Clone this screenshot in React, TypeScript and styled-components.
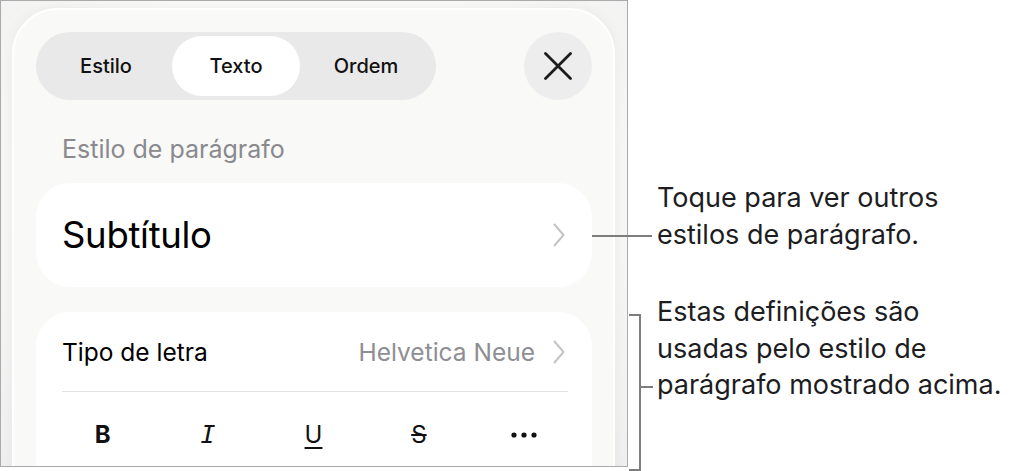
import React from "react";
import styled, { createGlobalStyle } from "styled-components";

const GlobalStyle = createGlobalStyle`
  html, body {
    margin: 0;
    padding: 0;
    background: #ffffff;
  }
  body {
    font-family: Inter, "Noto Sans", "Liberation Sans", sans-serif;
    color: #000;
  }
`;

const Page = styled.div`
  display: flex;
  align-items: flex-start;
  width: 1019px;
  height: 471px;
  overflow: hidden;
`;

const Frame = styled.div`
  box-sizing: border-box;
  width: 628px;
  height: 467px;
  flex-shrink: 0;
  border: 1px solid #aaaaaa;
  background: radial-gradient(ellipse at 50% 40%, #fafaf9 55%, #efefef 100%);
  overflow: hidden;
  padding: 7px 0 0 11px;
`;

const Panel = styled.div`
  box-sizing: border-box;
  width: 603px;
  height: 520px;
  border: 2px solid #ffffff;
  border-radius: 46px;
  background: #f9f9f8;
  box-shadow: 0 0 14px rgba(0, 0, 0, 0.05);
  padding: 22px 21px 0 22px;
  display: flex;
  flex-direction: column;
`;

const Header = styled.div`
  display: flex;
  align-items: center;
  justify-content: space-between;
`;

const Segmented = styled.div`
  display: grid;
  grid-template-columns: 132px 128px 132px;
  height: 68px;
  box-sizing: border-box;
  padding: 4px;
  border-radius: 34px;
  background: #e9e9e9;
`;

const Segment = styled.div<{ $active?: boolean }>`
  display: flex;
  align-items: center;
  justify-content: center;
  border-radius: 30px;
  font-size: 20px;
  font-weight: 500;
  color: #111;
  background: ${(p) => (p.$active ? "#ffffff" : "transparent")};
`;

const CloseButton = styled.div`
  width: 68px;
  height: 68px;
  border-radius: 50%;
  background: #ededed;
  display: flex;
  align-items: center;
  justify-content: center;
`;

const SectionLabel = styled.div`
  margin: 34px 0 0 26px;
  font-size: 25px;
  color: #8a8a8e;
  line-height: 30px;
`;

const Card = styled.div`
  background: #ffffff;
  border-radius: 34px;
`;

const StyleCard = styled(Card)`
  margin-top: 19px;
  height: 104px;
  box-sizing: border-box;
  padding: 0 27px 0 26px;
  display: flex;
  align-items: center;
  justify-content: space-between;
`;

const StyleName = styled.div`
  font-size: 36.5px;
  letter-spacing: -0.3px;
  color: #000;
`;

const FontCard = styled(Card)`
  margin-top: 25px;
  flex: 1;
`;

const Row = styled.div`
  height: 79px;
  margin: 0 24px 0 26px;
  padding-right: 3px;
  border-bottom: 1px solid #e2e2e2;
  display: flex;
  align-items: center;
  justify-content: space-between;
  font-size: 24.5px;
  color: #000;
`;

const RowValue = styled.div`
  display: flex;
  align-items: center;
  gap: 18px;
  color: #8e8e93;
`;

const Tools = styled.div`
  display: grid;
  grid-template-columns: repeat(5, 1fr);
  margin: 0 15px 0 14px;
  height: 86px;
  align-items: center;
`;

const Tool = styled.div<{ $kind?: string }>`
  display: flex;
  justify-content: center;
  align-items: center;
  font-size: ${(p) => (p.$kind === "i" ? "25px" : "24px")};
  line-height: 28px;
  color: #111;
  font-weight: ${(p) => (p.$kind === "b" ? 700 : 400)};
  font-family: ${(p) =>
    p.$kind === "i"
      ? `"DejaVu Sans Mono", monospace`
      : `Inter, "Noto Sans", sans-serif`};
  font-style: ${(p) => (p.$kind === "i" ? "italic" : "normal")};
  text-decoration: ${(p) =>
    p.$kind === "u" ? "underline" : p.$kind === "s" ? "line-through" : "none"};
  text-decoration-thickness: 1.5px;
  text-underline-offset: 4px;
`;

const Notes = styled.div`
  position: relative;
  margin-left: 29px;
  padding-top: 180px;
  display: flex;
  flex-direction: column;
  gap: 41px;
`;

const Note = styled.div`
  position: relative;
  font-size: 27px;
  line-height: 36.5px;
  color: #1d1d1f;
  white-space: nowrap;
`;

const Leader = styled.div`
  position: absolute;
  left: -65px;
  top: 55px;
  width: 60px;
  height: 2px;
  background: #7d7d7d;
`;

const Bracket = styled.div`
  position: absolute;
  left: -28px;
  top: 20px;
  width: 12px;
  height: 157px;
  box-sizing: border-box;
  border: 2px solid #7d7d7d;
  border-left: none;
  &::after {
    content: "";
    position: absolute;
    left: 10px;
    top: 70px;
    width: 14px;
    height: 2px;
    background: #7d7d7d;
  }
`;

const Chevron = () => (
  <svg width="12" height="24" viewBox="0 0 12 24" fill="none">
    <path
      d="M1.5 1.5 L10.5 12 L1.5 22.5"
      stroke="#c4c4c6"
      strokeWidth="2"
      strokeLinecap="round"
      strokeLinejoin="round"
    />
  </svg>
);

const CloseIcon = () => (
  <svg width="28" height="28" viewBox="0 0 28 28" fill="none">
    <path
      d="M1.5 1.5 L26.5 26.5 M26.5 1.5 L1.5 26.5"
      stroke="#1c1c1e"
      strokeWidth="2.8"
      strokeLinecap="round"
    />
  </svg>
);

const MoreIcon = () => (
  <svg width="26" height="6" viewBox="0 0 26 6">
    <circle cx="3" cy="3" r="2.6" fill="#111" />
    <circle cx="13" cy="3" r="2.6" fill="#111" />
    <circle cx="23" cy="3" r="2.6" fill="#111" />
  </svg>
);

export default function App() {
  return (
    <>
      <GlobalStyle />
      <Page>
        <Frame>
          <Panel>
            <Header>
              <Segmented>
                <Segment>Estilo</Segment>
                <Segment $active>Texto</Segment>
                <Segment>Ordem</Segment>
              </Segmented>
              <CloseButton>
                <CloseIcon />
              </CloseButton>
            </Header>
            <SectionLabel>Estilo de parágrafo</SectionLabel>
            <StyleCard>
              <StyleName>Subtítulo</StyleName>
              <Chevron />
            </StyleCard>
            <FontCard>
              <Row>
                <span>Tipo de letra</span>
                <RowValue>
                  Helvetica Neue
                  <Chevron />
                </RowValue>
              </Row>
              <Tools>
                <Tool $kind="b">B</Tool>
                <Tool $kind="i">I</Tool>
                <Tool $kind="u">U</Tool>
                <Tool $kind="s">S</Tool>
                <Tool $kind="more">
                  <MoreIcon />
                </Tool>
              </Tools>
            </FontCard>
          </Panel>
        </Frame>
        <Notes>
          <Note>
            <Leader />
            Toque para ver outros
            <br />
            estilos de parágrafo.
          </Note>
          <Note>
            <Bracket />
            Estas definições são
            <br />
            usadas pelo estilo de
            <br />
            parágrafo mostrado acima.
          </Note>
        </Notes>
      </Page>
    </>
  );
}
